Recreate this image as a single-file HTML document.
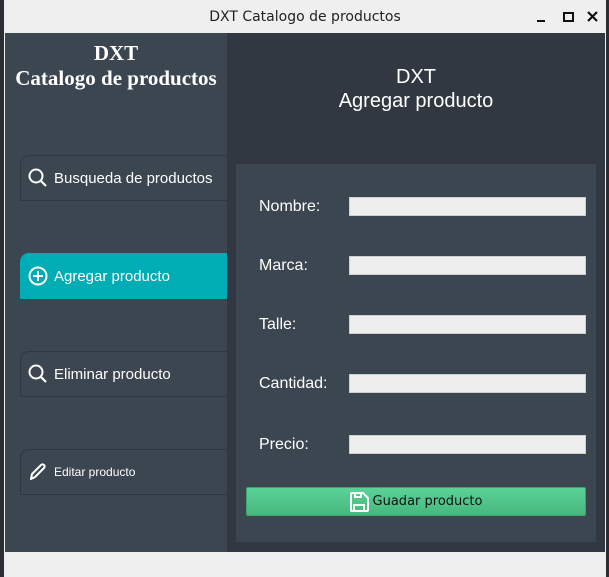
<!DOCTYPE html>
<html><head><meta charset="utf-8"><style>
*{margin:0;padding:0;box-sizing:border-box}
body{width:609px;height:577px;background:#2a2e33;position:relative;overflow:hidden;font-family:"Liberation Sans",sans-serif}
.win{position:absolute;left:4px;top:0;width:602px;height:577px;background:#efefef}
.title{position:absolute;left:0;top:0;width:602px;height:33px;text-align:center;line-height:34px;font-size:14px;color:#222;font-family:"DejaVu Sans",sans-serif}
.side{position:absolute;left:5px;top:33px;width:222px;height:519px;background:#3b4650}
.main{position:absolute;left:227px;top:33px;width:378px;height:519px;background:#313842}
.h1{position:absolute;left:0;width:222px;text-align:center;color:#fff;font-family:"Liberation Serif",serif;font-weight:bold;font-size:21px;line-height:25px;top:8px}
.h2{position:absolute;left:0;width:378px;text-align:center;color:#fff;font-size:20px;line-height:24px;top:32px}
.btn{position:absolute;left:15px;width:207px;height:46px;border:1px solid #2f3840;border-right:none;border-top-left-radius:9px;color:#fff;font-size:15px;display:flex;align-items:center;padding-left:7px}
.btn svg{margin-right:6px}
.panel{position:absolute;left:9px;top:131px;width:360px;height:378px;background:#3b4650}
.lbl{position:absolute;left:23px;color:#fff;font-size:16px}
.inp{position:absolute;left:113px;width:237px;height:19px;background:#eeeeee;border:1px solid #cfcfcf}
.save{position:absolute;left:10px;top:323px;width:340px;height:29px;border:1px solid #3aa56d;border-radius:2px;background:linear-gradient(#5ad398,#47b77e);display:flex;align-items:center;justify-content:center;font-size:13px;color:#111;font-family:"DejaVu Sans",sans-serif}
</style></head><body>
<div class="win">
<div class="title">DXT Catalogo de productos</div>
<div style="position:absolute;left:533px;top:20px;width:8px;height:2px;background:#111"></div>
<div style="position:absolute;left:559px;top:12px;width:11px;height:10px;border:2px solid #111"></div>
<svg style="position:absolute;left:583px;top:11px" width="11" height="11" viewBox="0 0 11 11"><path d="M1 1l9 9M10 1l-9 9" stroke="#111" stroke-width="2.2"/></svg>
</div>
<div class="side">
<div class="h1">DXT<br>Catalogo de productos</div>
<div class="btn" style="top:122px"><svg width="20" height="20" viewBox="0 0 20 20"><circle cx="8" cy="8" r="6.5" fill="none" stroke="#fff" stroke-width="2"/><path d="M12.5 12.5L18 18" stroke="#fff" stroke-width="2.2"/></svg>Busqueda de productos</div>
<div class="btn" style="top:220px;background:#00adb5;border-color:#00adb5"><svg width="20" height="20" viewBox="0 0 20 20"><circle cx="10" cy="10" r="8.5" fill="none" stroke="#fff" stroke-width="2"/><path d="M10 5v10M5 10h10" stroke="#fff" stroke-width="2"/></svg>Agregar producto</div>
<div class="btn" style="top:318px"><svg width="20" height="20" viewBox="0 0 20 20"><circle cx="8" cy="8" r="6.5" fill="none" stroke="#fff" stroke-width="2"/><path d="M12.5 12.5L18 18" stroke="#fff" stroke-width="2.2"/></svg>Eliminar producto</div>
<div class="btn" style="top:416px;font-size:12px"><svg width="20" height="20" viewBox="0 0 20 20"><path d="M3 17l1-5L13 3a2 2 0 0 1 3 3l-9 9z" fill="none" stroke="#fff" stroke-width="2" stroke-linejoin="round"/></svg>Editar producto</div>
</div>
<div class="main">
<div class="h2">DXT<br>Agregar producto</div>
<div class="panel">
<div class="lbl" style="top:34px">Nombre:</div><div class="inp" style="top:33px"></div>
<div class="lbl" style="top:93px">Marca:</div><div class="inp" style="top:92px"></div>
<div class="lbl" style="top:152px">Talle:</div><div class="inp" style="top:151px"></div>
<div class="lbl" style="top:211px">Cantidad:</div><div class="inp" style="top:210px"></div>
<div class="lbl" style="top:272px">Precio:</div><div class="inp" style="top:271px"></div>
<div class="save"><svg width="19" height="20" viewBox="0 0 19 20" style="margin-right:4px"><path d="M2 1h11l5 5v12a1 1 0 0 1-1 1H2a1 1 0 0 1-1-1V2a1 1 0 0 1 1-1z" fill="none" stroke="#fff" stroke-width="2"/><path d="M5 1v4h6V1M4 19v-6h10v6" fill="none" stroke="#fff" stroke-width="2"/></svg>Guadar producto</div>
</div>
</div>
</body></html>
